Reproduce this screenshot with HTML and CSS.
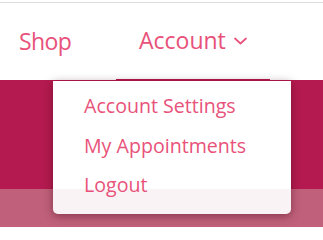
FILE: index.html
```html
<!DOCTYPE html>
<html>
<head>
<meta charset="utf-8">
<link rel="stylesheet" href="styles.css">
</head>
<body>
<header class="header">
  <nav class="nav">
    <a class="nav-item shop">Shop</a>
    <a class="nav-item account">Account
      <svg class="chev" width="13" height="8" viewBox="0 0 13 8"><path d="M1 1.5 L6.5 6.5 L12 1.5" fill="none" stroke="#e8527a" stroke-width="1.7" stroke-linecap="round" stroke-linejoin="round"/></svg>
    </a>
  </nav>
  <div class="dropdown">
    <a class="dd-item">Account Settings</a>
    <a class="dd-item">My Appointments</a>
    <a class="dd-item">Logout</a>
  </div>
</header>
<section class="band"></section>
<section class="band-light"></section>
</body>
</html>
```
FILE: styles.css
```css
html, body { margin: 0; padding: 0; background: #fff; }
body { font-family: "Open Sans", Lato, sans-serif; width: 323px; height: 227px; overflow: hidden; }
.header { position: relative; height: 80px; box-sizing: border-box; padding-top: 2px; }
.header::before { content: ""; display: block; height: 1px; background: #dcdcdc; }
.nav { display: flex; height: 77px; }
.nav-item { display: flex; align-items: center; color: #e8527a; font-size: 23px; text-decoration: none; box-sizing: border-box; padding-bottom: 2px; }
.shop { padding-left: 19px; width: 116px; letter-spacing: -0.6px; }
.account { width: 154px; padding-left: 23px; border-bottom: 2px solid #b41a4f; height: 78px; }
.chev { margin-left: 8px; margin-top: 2px; }
.dropdown { position: absolute; left: 53px; top: 81px; width: 238px; height: 133px; box-sizing: border-box; padding: 5px 0 0 31px; display: flex; flex-direction: column; background: linear-gradient(to bottom, #fff 108px, #f9f3f5 108px); border-radius: 0 0 5px 5px; box-shadow: 0 2px 10px rgba(60,0,20,0.45); z-index: 2; }
.dd-item { color: #e8527a; font-size: 19.6px; line-height: 40px; height: 39.5px; }
.band { height: 109px; background: #b41a4f; }
.band-light { height: 38px; background: #c0607a; }
```
